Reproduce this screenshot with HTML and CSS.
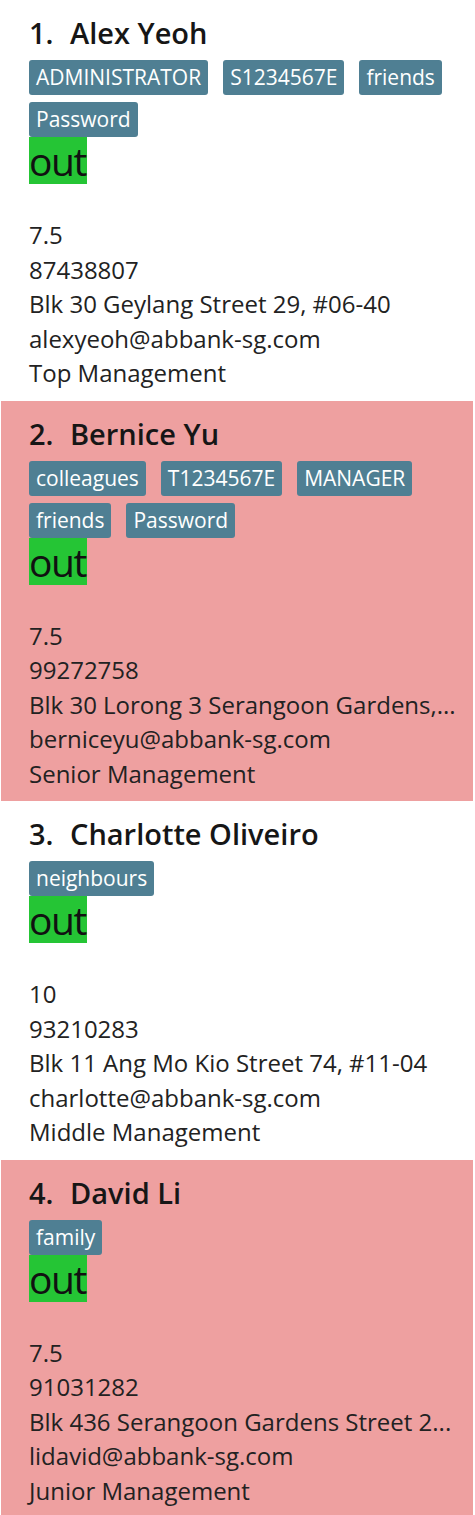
FILE: index.html
```html
<!DOCTYPE html>
<html>
<head>
<meta charset="utf-8">
<link rel="stylesheet" href="styles.css">
</head>
<body>
<div class="list">
  <div class="card">
    <div class="name"><span class="idx">1.</span>Alex Yeoh</div>
    <div class="tags">
      <span class="tag">ADMINISTRATOR</span>
      <span class="tag">S1234567E</span>
      <span class="tag">friends</span>
      <span class="tag">Password</span>
    </div>
    <div class="status">out</div>
    <div class="details">
      <div>7.5</div>
      <div>87438807</div>
      <div>Blk 30 Geylang Street 29, #06-40</div>
      <div>alexyeoh@abbank-sg.com</div>
      <div>Top Management</div>
    </div>
  </div>
  <div class="card alt">
    <div class="name"><span class="idx">2.</span>Bernice Yu</div>
    <div class="tags">
      <span class="tag">colleagues</span>
      <span class="tag">T1234567E</span>
      <span class="tag">MANAGER</span>
      <span class="tag">friends</span>
      <span class="tag">Password</span>
    </div>
    <div class="status">out</div>
    <div class="details">
      <div>7.5</div>
      <div>99272758</div>
      <div>Blk 30 Lorong 3 Serangoon Gardens,...</div>
      <div>berniceyu@abbank-sg.com</div>
      <div>Senior Management</div>
    </div>
  </div>
  <div class="card">
    <div class="name"><span class="idx">3.</span>Charlotte Oliveiro</div>
    <div class="tags">
      <span class="tag">neighbours</span>
    </div>
    <div class="status">out</div>
    <div class="details">
      <div>10</div>
      <div>93210283</div>
      <div>Blk 11 Ang Mo Kio Street 74, #11-04</div>
      <div>charlotte@abbank-sg.com</div>
      <div>Middle Management</div>
    </div>
  </div>
  <div class="card alt">
    <div class="name"><span class="idx">4.</span>David Li</div>
    <div class="tags">
      <span class="tag">family</span>
    </div>
    <div class="status">out</div>
    <div class="details">
      <div>7.5</div>
      <div>91031282</div>
      <div>Blk 436 Serangoon Gardens Street 2...</div>
      <div>lidavid@abbank-sg.com</div>
      <div>Junior Management</div>
    </div>
  </div>
</div>
</body>
</html>
```
FILE: styles.css
```css
html, body {
  margin: 0;
  padding: 0;
  background: #ffffff;
}
body {
  font-family: "Open Sans", "Noto Sans", sans-serif;
  color: #222222;
  width: 475px;
  overflow: hidden;
}
.list {
  display: flex;
  flex-direction: column;
  padding: 0 2px 0 1px;
}
.card {
  padding: 15px 12px 10px 28px;
  display: flex;
  flex-direction: column;
  align-items: flex-start;
  overflow: hidden;
}
.card.alt {
  background: #eea0a0;
}
.name {
  font-size: 29px;
  font-weight: 600;
  line-height: 35px;
  color: #161616;
  white-space: nowrap;
}
.idx {
  display: inline-block;
  width: 41px;
}
.tags {
  margin-top: 10px;
  display: flex;
  flex-wrap: wrap;
  gap: 7px 15px;
}
.tag {
  background: #4f7f93;
  color: #ffffff;
  font-size: 21px;
  line-height: 35px;
  height: 35px;
  padding: 0 7px;
  border-radius: 3px;
  white-space: nowrap;
}
.status {
  background: #25c535;
  color: #111111;
  font-size: 39px;
  line-height: 47px;
  height: 47px;
  margin-bottom: 34px;
  letter-spacing: -1.5px;
  padding-right: 1px;
}
.details {
  font-size: 24px;
  line-height: 34.5px;
  white-space: nowrap;
}
```
